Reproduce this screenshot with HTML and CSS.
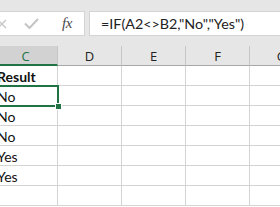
FILE: index.html
```html
<!DOCTYPE html>
<html lang="en">
<head>
    <meta charset="UTF-8">
    <meta name="viewport" content="width=device-width, initial-scale=1.0">
    <title>Book1 - Excel</title>
    <link rel="stylesheet" href="styles.css">
</head>
<body>
    <div class="formula-bar">
        <div class="name-tools">
            <svg class="icon-cancel" width="10" height="10" viewBox="0 0 10 10">
                <path d="M1 1 L9 9 M9 1 L1 9" />
            </svg>
            <svg class="icon-enter" width="15" height="11" viewBox="0 0 15 11">
                <path d="M1 5.5 L5.5 10 L14 1" />
            </svg>
            <span class="fx">fx</span>
        </div>
        <div class="formula-input">=IF(A2&lt;&gt;B2,"No","Yes")</div>
    </div>

    <div class="sheet">
        <!-- column headers -->
        <div class="col-head selected">C</div>
        <div class="col-head">D</div>
        <div class="col-head">E</div>
        <div class="col-head">F</div>
        <div class="col-head">G</div>

        <div class="cell bold">Result</div>
        <div class="cell"></div>
        <div class="cell"></div>
        <div class="cell"></div>
        <div class="cell"></div>

        <div class="cell active">No</div>
        <div class="cell"></div>
        <div class="cell"></div>
        <div class="cell"></div>
        <div class="cell"></div>

        <div class="cell">No</div>
        <div class="cell"></div>
        <div class="cell"></div>
        <div class="cell"></div>
        <div class="cell"></div>

        <div class="cell">No</div>
        <div class="cell"></div>
        <div class="cell"></div>
        <div class="cell"></div>
        <div class="cell"></div>

        <div class="cell">Yes</div>
        <div class="cell"></div>
        <div class="cell"></div>
        <div class="cell"></div>
        <div class="cell"></div>

        <div class="cell">Yes</div>
        <div class="cell"></div>
        <div class="cell"></div>
        <div class="cell"></div>
        <div class="cell"></div>

        <div class="cell"></div>
        <div class="cell"></div>
        <div class="cell"></div>
        <div class="cell"></div>
        <div class="cell"></div>
    </div>
</body>
</html>
```

FILE: styles.css
```css
body, html {
    margin: 0;
    padding: 0;
    height: 100%;
    overflow: hidden;
    background: #ffffff;
    font-family: Lato, "Liberation Sans", sans-serif;
}

.formula-bar {
    display: flex;
    height: 46px;
    padding-top: 11px;
    box-sizing: border-box;
    background: #e6e6e6;
}

.name-tools {
    display: flex;
    align-items: center;
    width: 91px;
    height: 25px;
    margin-left: -6px;
    box-sizing: border-box;
    background: #ffffff;
    border: 1px solid #d4d4d4;
}

.icon-cancel {
    margin-left: 2px;
}

.icon-cancel path {
    fill: none;
    stroke: #c8c8c8;
    stroke-width: 1.4;
}

.icon-enter {
    margin-left: 17px;
}

.icon-enter path {
    fill: none;
    stroke: #c4c4c4;
    stroke-width: 2;
}

.fx {
    margin-left: 23px;
    font-family: "Liberation Serif", serif;
    font-style: italic;
    font-size: 15px;
    color: #4a4a4a;
    letter-spacing: -0.5px;
}

.formula-input {
    flex: 1;
    height: 25px;
    margin-left: 4px;
    margin-right: -10px;
    padding-left: 11px;
    box-sizing: border-box;
    background: #ffffff;
    border: 1px solid #d4d4d4;
    font-size: 14.3px;
    line-height: 23px;
    color: #222222;
    white-space: nowrap;
}

.sheet {
    display: grid;
    grid-template-columns: repeat(5, 64px);
    grid-auto-rows: 20px;
    margin-left: -6px;
}

.col-head {
    box-sizing: border-box;
    background: #e6e6e6;
    border-right: 1px solid #c6c6c6;
    border-bottom: 1px solid #a8a8a8;
    text-align: center;
    font-family: "Open Sans", sans-serif;
    font-size: 13px;
    line-height: 20px;
    color: #222222;
}

.col-head.selected {
    background: #d2d2d2;
    color: #217346;
    border-bottom: 2px solid #217346;
}

.cell {
    box-sizing: border-box;
    border-right: 1px solid #d4d4d4;
    border-bottom: 1px solid #d4d4d4;
    padding-left: 3px;
    font-size: 14px;
    line-height: 22px;
    color: #111111;
}

.cell.bold {
    font-weight: bold;
}

.cell.active {
    position: relative;
    z-index: 1;
    outline: 2px solid #217346;
    outline-offset: -1px;
}

.cell.active::after {
    content: "";
    position: absolute;
    right: -5px;
    bottom: -5px;
    width: 5px;
    height: 5px;
    background: #217346;
    border: 1px solid #ffffff;
}
```
